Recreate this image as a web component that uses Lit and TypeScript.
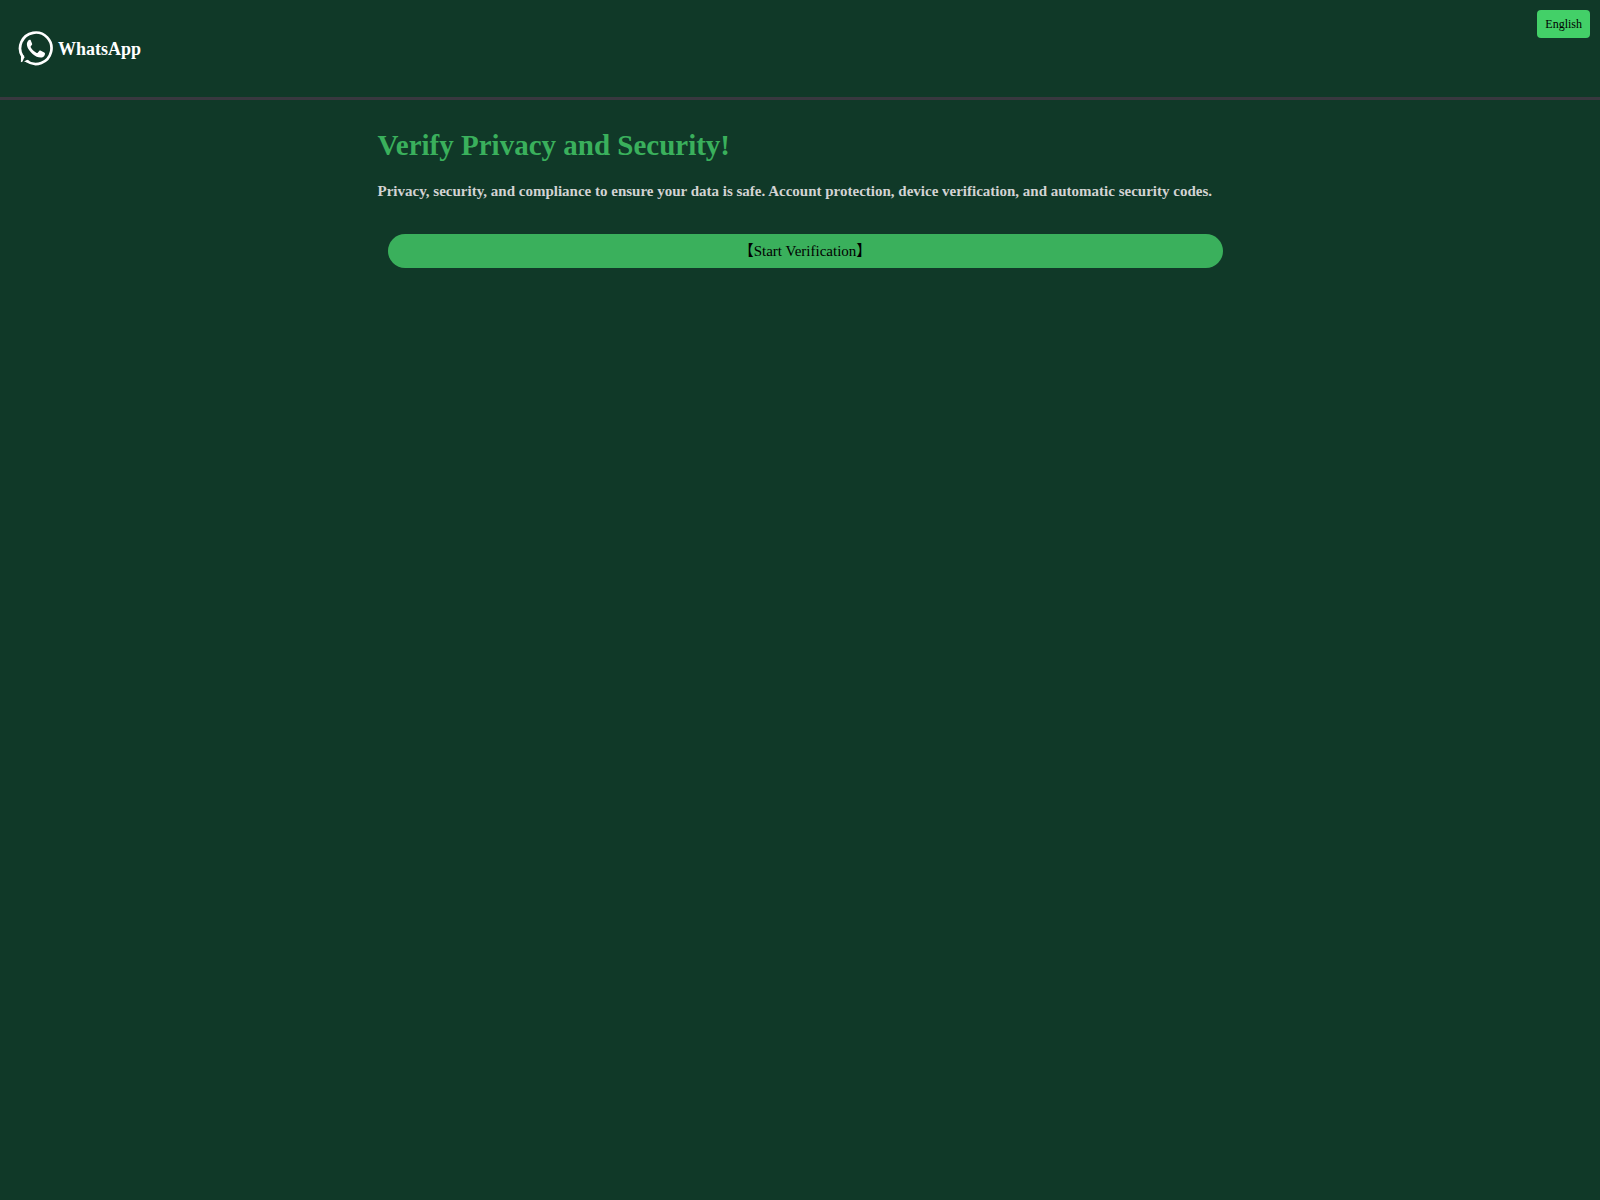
import { LitElement, html, css } from "lit";
import { customElement } from "lit/decorators.js";

@customElement("app-root")
export class AppRoot extends LitElement {
  static styles = css`
    :host {
      display: block;
      min-height: 100vh;
      background: #103928;
      color: #fff;
      font-family: "Liberation Serif", "Noto Sans CJK SC", serif;
    }
    .header {
      display: flex;
      justify-content: space-between;
      align-items: flex-start;
      padding: 10px 10px 30px 18px;
      border-bottom: 3px solid #38383f;
    }
    .brand {
      display: flex;
      align-items: center;
      gap: 4px;
      padding-top: 21px;
      color: #fff;
      text-decoration: none;
      font-size: 18px;
      line-height: 36px;
      font-weight: bold;
    }
    .logo {
      display: block;
      width: 36px;
      height: 36px;
    }
    .language {
      padding: 0 8px;
      border: 0;
      border-radius: 4px;
      background: #43d068;
      color: #000;
      font: inherit;
      font-size: 12px;
      line-height: 28px;
    }
    .content {
      box-sizing: border-box;
      max-width: 845px;
      margin: 0 auto;
      padding: 24px 0;
      font-variant-ligatures: none;
    }
    .title {
      margin: 0;
      color: #3ab05c;
      font-size: 29px;
      line-height: 42px;
    }
    .lead {
      margin: 15px 0 33px;
      color: #d3d3d3;
      font-size: 15px;
      line-height: 20px;
      font-weight: bold;
    }
    .actions {
      display: flex;
      padding-left: 10px;
    }
    .start {
      flex: 1;
      padding: 0;
      border: 0;
      border-radius: 17px;
      background: #3ab05c;
      color: #000;
      font: inherit;
      font-variant-ligatures: none;
      font-size: 15px;
      line-height: 34px;
    }
  `;

  render() {
    return html`
      <header class="header">
        <a class="brand" href="#">
          <svg class="logo" viewBox="0 0 36 36" aria-hidden="true">
            <path
              d="M4.6 25.8A15.700 15.700 0 1 1 8.600 30"
              fill="none"
              stroke="#fff"
              stroke-width="2.700"
            />
            <path d="M3 25l3-.8.4 2-2 4.600-1.500.4z" fill="#fff" />
            <path d="M6 30.600l3.200-1.900 2.400 1.300-2 1.500z" fill="#fff" />
            <path
              d="M12.100 8.700c-1.200-.3-3 1.500-3.200 3.900-.3 3.700 2.500 7.600 5.700 10.300 3.100 2.600 6.500 4 9.200 3.500 2.100-.4 3.300-2.100 3.200-4 0-.5-.3-.8-.8-1l-3.800-1.800c-.5-.2-.9-.1-1.200.3l-1.500 1.800c-.3.3-.6.4-1 .2-2.600-1.200-4.700-3.200-6-5.600-.2-.4-.1-.7.100-1l1.200-1.600c.2-.3.2-.6.1-1l-1.500-3.600c-.1-.3-.5-.4-.5-.4z"
              fill="#fff"
            />
          </svg>
          WhatsApp
        </a>
        <button class="language" type="button">English</button>
      </header>
      <main class="content">
        <h1 class="title">Verify Privacy and Security!</h1>
        <p class="lead">
          Privacy, security, and compliance to ensure your data is safe. Account
          protection, device verification, and automatic security codes.
        </p>
        <div class="actions">
          <button class="start" type="button">【Start Verification】</button>
        </div>
      </main>
    `;
  }
}
